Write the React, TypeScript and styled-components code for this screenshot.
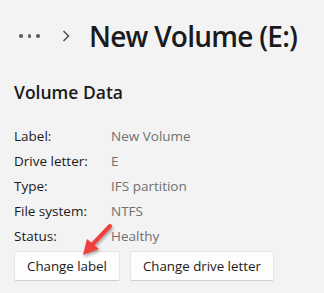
import React from "react";
import styled, { createGlobalStyle } from "styled-components";

const Global = createGlobalStyle`
  html, body { margin: 0; padding: 0; background: #f3f3f3; }
  body { font-family: "Open Sans", "Noto Sans", sans-serif; color: #1b1b1b; }
`;

const Page = styled.div`
  position: relative;
  width: 324px;
  height: 293px;
  overflow: hidden;
  background: #f3f3f3;
`;

const Breadcrumb = styled.div`
  display: flex;
  align-items: center;
  height: 40px;
  padding: 16px 0 0 19px;
`;

const Dots = styled.div`
  display: flex;
  gap: 5px;
  width: 22px;
  margin-right: 21px;
  span {
    width: 3.5px;
    height: 3.5px;
    border-radius: 50%;
    background: #5f5f5f;
  }
`;

const Chevron = styled.svg`
  width: 8px;
  height: 12px;
  margin-right: 19px;
`;

const Title = styled.h1`
  margin: 0;
  font-size: 28px;
  font-weight: 600;
  letter-spacing: -0.75px;
  color: #1a1a1a;
  white-space: nowrap;
`;

const Section = styled.div`
  padding: 24px 0 0 14px;
`;

const Heading = styled.h2`
  margin: 0 0 19px 0;
  font-size: 17.5px;
  font-weight: 600;
  color: #1a1a1a;
`;

const Rows = styled.div`
  display: grid;
  grid-template-columns: 97px auto;
  grid-auto-rows: 25px;
  align-items: center;
  font-size: 13.5px;
`;

const Key = styled.div`
  color: #1b1b1b;
`;

const Value = styled.div`
  color: #707070;
`;

const Buttons = styled.div`
  display: flex;
  gap: 10px;
  margin-top: 3px;
`;

const Button = styled.button`
  height: 30px;
  padding: 0 12px;
  background: #fdfdfd;
  border: 1px solid #e5e5e5;
  border-bottom-color: #cfcfcf;
  border-radius: 2px;
  font-family: inherit;
  font-size: 13.3px;
  color: #1b1b1b;
`;

const Arrow = styled.svg`
  position: absolute;
  left: 78px;
  top: 222px;
  width: 40px;
  height: 42px;
  overflow: visible;
`;

const rows: [string, string][] = [
  ["Label:", "New Volume"],
  ["Drive letter:", "E"],
  ["Type:", "IFS partition"],
  ["File system:", "NTFS"],
  ["Status:", "Healthy"],
];

export default function App() {
  return (
    <Page>
      <Global />
      <Breadcrumb>
        <Dots>
          <span />
          <span />
          <span />
        </Dots>
        <Chevron viewBox="0 0 8 12">
          <path d="M1.5 1 L6.5 6 L1.5 11" fill="none" stroke="#555" strokeWidth="1.6" />
        </Chevron>
        <Title>New Volume (E:)</Title>
      </Breadcrumb>
      <Section>
        <Heading>Volume Data</Heading>
        <Rows>
          {rows.map(([k, v]) => (
            <React.Fragment key={k}>
              <Key>{k}</Key>
              <Value>{v}</Value>
            </React.Fragment>
          ))}
        </Rows>
        <Buttons>
          <Button>Change label</Button>
          <Button>Change drive letter</Button>
        </Buttons>
      </Section>
      <Arrow viewBox="0 0 40 42">
        <defs>
          <filter id="sh" x="-50%" y="-50%" width="200%" height="200%">
            <feDropShadow dx="1" dy="2" stdDeviation="1.5" floodColor="#000" floodOpacity="0.35" />
          </filter>
        </defs>
        <g filter="url(#sh)">
          <line x1="32" y1="4" x2="13" y2="24" stroke="#f0413a" strokeWidth="4" strokeLinecap="round" />
          <polygon points="5,33 9,17 21,27" fill="#f0413a" />
        </g>
      </Arrow>
    </Page>
  );
}
